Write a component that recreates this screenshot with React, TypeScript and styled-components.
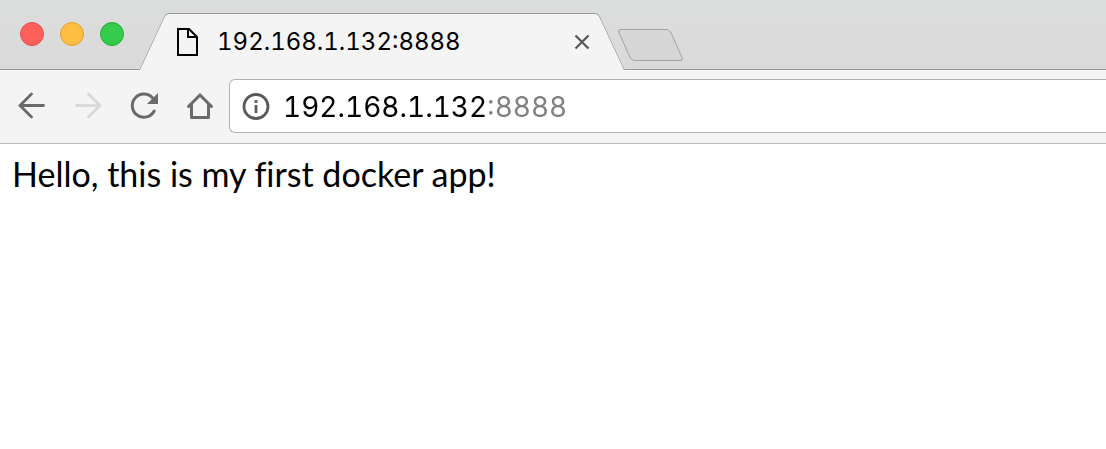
import React from "react";
import styled, { createGlobalStyle } from "styled-components";

const GlobalStyle = createGlobalStyle`
  * { box-sizing: border-box; }
  body { margin: 0; background: #fff; }
  button { padding: 0; border: 0; background: none; color: inherit; font: inherit; }
  svg { display: block; }
`;

const uiFont = `Inter, Roboto, sans-serif`;

const Browser = styled.div`
  min-height: 100vh;
  overflow-x: hidden;
  font-family: ${uiFont};
`;

const TabStrip = styled.header`
  display: flex;
  align-items: flex-end;
  height: 70px;
  padding-left: 20px;
  border-bottom: 1px solid #999b9b;
  background: linear-gradient(#dbdedd, #dbdbdb 55%, #dadada);
`;

const WindowControls = styled.div`
  display: flex;
  gap: 16px;
  padding-bottom: 23px;
`;

const WindowButton = styled.button<{ $fill: string; $edge: string }>`
  width: 24px;
  height: 24px;
  border: 1px solid ${(p) => p.$edge};
  border-radius: 50%;
  background: ${(p) => p.$fill};
`;

const Tab = styled.div`
  position: relative;
  z-index: 0;
  display: flex;
  align-items: center;
  width: 485px;
  height: 57px;
  margin: 0 0 -1px 15px;
  padding: 0 34px 0 38px;

  &::before,
  &::after {
    content: "";
    position: absolute;
    z-index: -1;
    top: 0;
    bottom: 0;
    width: 50%;
    border-top: 1px solid #999b9b;
    background: #f4f4f4;
  }
  &::before {
    left: 0;
    border-left: 1px solid #999b9b;
    border-top-left-radius: 4px;
    transform: skewX(-25deg);
    transform-origin: bottom left;
  }
  &::after {
    right: 0;
    border-right: 1px solid #999b9b;
    border-top-right-radius: 4px;
    transform: skewX(25deg);
    transform-origin: bottom right;
  }
`;

const TabTitle = styled.span`
  flex: 1;
  margin-left: 18px;
  color: #000;
  font-size: 24px;
  font-variant-numeric: tabular-nums;
  line-height: 32px;
`;

const CloseButton = styled.button`
  color: #5a5a5a;
`;

const NewTabButton = styled.button`
  width: 53px;
  height: 32px;
  margin-bottom: 8px;
  border: 1px solid #a3a3a3;
  border-radius: 4px;
  background: #d6d6d6;
  transform: skewX(24deg);
`;

const Toolbar = styled.nav`
  display: flex;
  align-items: center;
  height: 74px;
  padding: 0 0 2px 18px;
  border-bottom: 1px solid #bcbcbc;
  background: #f4f4f4;
`;

const NavButtons = styled.div`
  display: flex;
  gap: 28px;
`;

const NavButton = styled.button`
  color: #6a6a6a;
  &:disabled { color: #d9d9d9; }
`;

const AddressBar = styled.label`
  display: flex;
  flex: 1;
  align-items: center;
  height: 54px;
  margin-left: 15px;
  padding: 2px 0 0 12px;
  border: 1px solid #b4b4b4;
  border-right: 0;
  border-radius: 6px 0 0 6px;
  background: #fff;
  color: #5a5a5a;
`;

/* The host is black and the port grey: the gradient is clipped to the glyphs. */
const AddressInput = styled.input`
  flex: 1;
  min-width: 0;
  height: 40px;
  margin-left: 13px;
  padding: 0;
  border: 0;
  outline: 0;
  background: linear-gradient(to right, #000 202px, #808080 202px);
  background-clip: text;
  -webkit-background-clip: text;
  color: transparent;
  font: 28px ${uiFont};
  font-variant-numeric: tabular-nums;
`;

const Page = styled.main`
  padding: 7px 12px;
`;

const Message = styled.p`
  margin: 0;
  color: #000;
  font: 34px/46px "Century Gothic", "URW Gothic", Lato, sans-serif;
  font-variant-ligatures: none;
`;

const PageIcon = () => (
  <svg width="22" height="28" viewBox="0 0 22 28" fill="none" stroke="#000" strokeWidth="2" aria-hidden="true">
    <path d="M1 1H12L20 9V27H1Z" />
    <path d="M11 1V9H20" />
  </svg>
);

const CloseIcon = () => (
  <svg width="16" height="16" viewBox="0 0 16 16" fill="none" stroke="currentColor" strokeWidth="2.3" aria-hidden="true">
    <path d="M1.5 1.5L14.5 14.5M14.5 1.5L1.5 14.5" />
  </svg>
);

const ArrowIcon = ({ forward = false }: { forward?: boolean }) => (
  <svg width="28" height="28" viewBox="0 0 28 28" fill="none" stroke="currentColor" strokeWidth="2.8" strokeLinecap="round" aria-hidden="true">
    <path d={forward ? "M2.5 13.5H25M14.5 2L26 13.5L14.5 25" : "M25.5 13.5H3M13.5 2L2 13.5L13.5 25"} />
  </svg>
);

const ReloadIcon = () => (
  <svg width="28" height="28" viewBox="0 0 28 28" aria-hidden="true">
    <path d="M22.4 5.8A11.6 11.6 0 1 0 24.2 19" fill="none" stroke="currentColor" strokeWidth="3" strokeLinecap="round" />
    <path d="M28 1V12H17Z" fill="currentColor" />
  </svg>
);

const HomeIcon = () => (
  <svg width="28" height="28" viewBox="0 0 28 28" fill="none" stroke="currentColor" strokeWidth="3" strokeLinecap="round" aria-hidden="true">
    <path d="M2.5 14.5L14 3L25.5 14.5" />
    <path d="M5.5 13V25.5H22.5V13" strokeLinejoin="round" />
  </svg>
);

const InfoIcon = () => (
  <svg width="28" height="28" viewBox="0 0 28 28" aria-hidden="true">
    <circle cx="14" cy="13.5" r="12" fill="none" stroke="currentColor" strokeWidth="2.8" />
    <path d="M12.6 7H15.4V10H12.6ZM12.6 12H15.4V20H12.6Z" fill="currentColor" />
  </svg>
);

const windowControls = [
  { label: "Close window", fill: "#fd605b", edge: "#e0504c" },
  { label: "Minimize window", fill: "#fdbe41", edge: "#dfa033" },
  { label: "Zoom window", fill: "#35cb4b", edge: "#26ab37" },
];

export default function App() {
  return (
    <Browser>
      <GlobalStyle />
      <TabStrip>
        <WindowControls>
          {windowControls.map((c) => (
            <WindowButton key={c.label} aria-label={c.label} $fill={c.fill} $edge={c.edge} />
          ))}
        </WindowControls>
        <Tab>
          <PageIcon />
          <TabTitle>192.168.1.132:8888</TabTitle>
          <CloseButton aria-label="Close tab"><CloseIcon /></CloseButton>
        </Tab>
        <NewTabButton aria-label="New tab" />
      </TabStrip>
      <Toolbar aria-label="Navigation">
        <NavButtons>
          <NavButton aria-label="Back"><ArrowIcon /></NavButton>
          <NavButton aria-label="Forward" disabled><ArrowIcon forward /></NavButton>
          <NavButton aria-label="Reload"><ReloadIcon /></NavButton>
          <NavButton aria-label="Home"><HomeIcon /></NavButton>
        </NavButtons>
        <AddressBar>
          <InfoIcon />
          <AddressInput aria-label="Address" defaultValue="192.168.1.132:8888" spellCheck={false} />
        </AddressBar>
      </Toolbar>
      <Page>
        <Message>Hello, this is my first docker app!</Message>
      </Page>
    </Browser>
  );
}
